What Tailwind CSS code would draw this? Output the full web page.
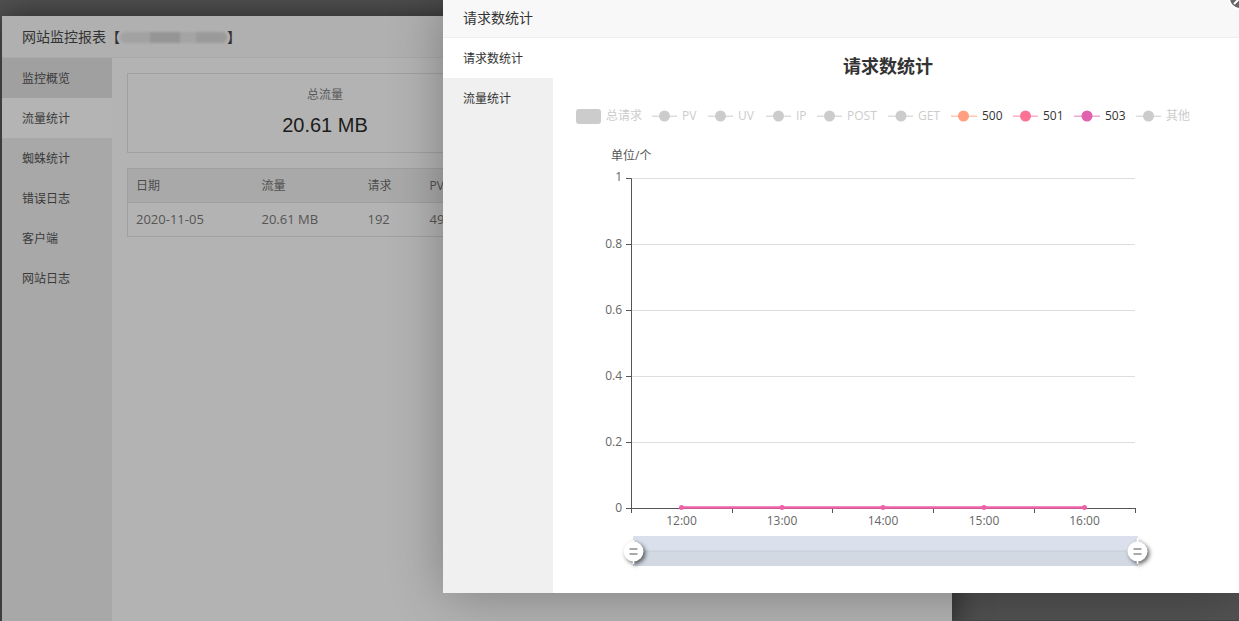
<!DOCTYPE html>
<html lang="zh">

<head>
    <title>网站监控报表</title>
    <meta charset="UTF-8">
    <meta name="viewport" content="width=device-width, initial-scale=1">
    <script src="https://cdn.jsdelivr.net/npm/@tailwindcss/browser@4"></script>
</head>

<body class="relative w-[1239px] h-[621px] overflow-hidden bg-[#525252] font-['Open_Sans','Noto_Sans_CJK_SC',sans-serif] text-xs">

    <div class="absolute left-[2px] top-[16px] w-[950px] h-[620px] flex flex-col bg-[#b3b3b3] shadow-[0_0_30px_rgba(0,0,0,0.55)]">
        <header class="h-[42px] shrink-0 flex items-center pl-5 bg-[#b0b0b0] border-b border-[#a9a9a9] text-sm text-[#333]">
            <span>网站监控报表</span>
            <span class="relative">【<span class="inline-block w-[107px]"></span>】
                <span class="absolute left-[14px] top-[5px] w-[107px] h-[11px] flex rounded-md overflow-hidden blur-[1px]">
                    <span class="w-[30px] bg-[#a2a2a2]"></span>
                    <span class="w-[30px] bg-[#959595]"></span>
                    <span class="w-[16px] bg-[#a4a4a4]"></span>
                    <span class="w-[31px] bg-[#9a9a9a]"></span>
                </span>
            </span>
        </header>
        <div class="flex flex-1">
            <nav class="w-[110px] shrink-0 bg-[#a8a8a8] text-[#3a3a3a]">
                <div class="h-10 flex items-center pl-5 pt-0.5 bg-[#a0a0a0]">监控概览</div>
                <div class="h-10 flex items-center pl-5 pt-0.5 bg-[#b4b4b4]">流量统计</div>
                <div class="h-10 flex items-center pl-5 pt-0.5">蜘蛛统计</div>
                <div class="h-10 flex items-center pl-5 pt-0.5">错误日志</div>
                <div class="h-10 flex items-center pl-5 pt-0.5">客户端</div>
                <div class="h-10 flex items-center pl-5 pt-0.5">网站日志</div>
            </nav>
            <main class="flex-1 px-[15px] pt-[15px]">
                <div class="h-20 flex border border-[#a0a0a0]">
                    <div class="w-[394px] pt-[13px] text-center">
                        <p class="text-[#5a5a5a] leading-4">总流量</p>
                        <p class="mt-[10px] text-xl leading-6 text-[#1c1c1c] font-['Liberation_Sans',sans-serif]">20.61 MB</p>
                    </div>
                </div>
                <table class="mt-[15px] w-full border border-[#a0a0a0] text-left text-[#4e4e4e] table-fixed">
                    <thead class="bg-[#a9a9a9]">
                        <tr class="h-[34px] border-b border-[#a0a0a0]">
                            <th class="w-[126px] pl-2 font-normal">日期</th>
                            <th class="w-[106px] pl-2 font-normal">流量</th>
                            <th class="w-[62px] pl-2 font-normal">请求</th>
                            <th class="pl-2 font-normal">PV</th>
                        </tr>
                    </thead>
                    <tbody class="text-[13px] text-[#555]">
                        <tr class="h-[34px]">
                            <td class="pl-2">2020-11-05</td>
                            <td class="pl-2">20.61 MB</td>
                            <td class="pl-2">192</td>
                            <td class="pl-2">49</td>
                        </tr>
                    </tbody>
                </table>
            </main>
        </div>
    </div>

    <!-- chart dialog -->
    <div class="absolute left-[443px] top-0 w-[796px] h-[593px] flex flex-col bg-white shadow-[1px_1px_50px_rgba(0,0,0,0.3)]">
        <div class="h-[38px] shrink-0 flex items-center pl-5 pb-0.5 bg-[#f8f8f8] border-b border-[#eee] text-sm text-[#333]">请求数统计</div>
        <div class="flex flex-1">
            <aside class="w-[110px] shrink-0 bg-[#f0f0f0] text-[#333]">
                <div class="h-10 flex items-center pl-5 pt-0.5 bg-white">请求数统计</div>
                <div class="h-10 flex items-center pl-5 pt-0.5">流量统计</div>
            </aside>
            <section class="w-[670px] relative">
                <h2 class="pt-[15px] text-center text-lg leading-[27px] font-bold text-[#333]">请求数统计</h2>
                <svg class="absolute left-0 top-0" width="686" height="555" viewBox="553 38 686 555" font-size="12" font-family="'Open Sans','Noto Sans CJK SC',sans-serif">
                    <!-- legend -->
                    <rect x="576" y="109" width="25" height="15" rx="3" fill="#ccc" />
                    <text x="606" y="120" fill="#ccc">总请求</text>
                    <g fill="#ccc" stroke="none">
                        <rect x="652" y="115.5" width="25" height="1.5" fill="#ddd" /><circle cx="664.5" cy="116" r="5.5" />
                        <rect x="708" y="115.5" width="25" height="1.5" fill="#ddd" /><circle cx="720.5" cy="116" r="5.5" />
                        <rect x="766" y="115.5" width="25" height="1.5" fill="#ddd" /><circle cx="778.5" cy="116" r="5.5" />
                        <rect x="817" y="115.5" width="25" height="1.5" fill="#ddd" /><circle cx="829.5" cy="116" r="5.5" />
                        <rect x="888" y="115.5" width="25" height="1.5" fill="#ddd" /><circle cx="901" cy="116" r="5.5" />
                        <rect x="1136" y="115.5" width="25" height="1.5" fill="#ddd" /><circle cx="1148.5" cy="116" r="5.5" />
                        <text x="682" y="120">PV</text>
                        <text x="738" y="120">UV</text>
                        <text x="796" y="120">IP</text>
                        <text x="847" y="120">POST</text>
                        <text x="918" y="120">GET</text>
                        <text x="1166" y="120">其他</text>
                    </g>
                    <rect x="951" y="115.5" width="26" height="1.5" fill="#ffc8b4" /><circle cx="963.5" cy="116" r="5.5" fill="#ff9f7f" />
                    <text x="982" y="120" fill="#333">500</text>
                    <rect x="1013" y="115.5" width="25" height="1.5" fill="#ffb0c4" /><circle cx="1025.5" cy="116" r="5.5" fill="#fb7293" />
                    <text x="1043" y="120" fill="#333">501</text>
                    <rect x="1074" y="115.5" width="26" height="1.5" fill="#eeaad2" /><circle cx="1087" cy="116" r="5.5" fill="#e062ae" />
                    <text x="1105" y="120" fill="#333">503</text>

                    <!-- grid -->
                    <g stroke="#ddd" stroke-width="1">
                        <path d="M631 178.5H1135M631 244.5H1135M631 310.5H1135M631 376.5H1135M631 442.5H1135" />
                    </g>
                    <!-- axes -->
                    <g stroke="#555" stroke-width="1" fill="none">
                        <path d="M626 178.5H631.5V508.5M626 244.5H631M626 310.5H631M626 376.5H631M626 442.5H631M626 508.5H1135.5" />
                        <path d="M631.5 508V513M732.5 508V513M832.5 508V513M933.5 508V513M1034.5 508V513M1135.5 508V513" />
                    </g>
                    <g fill="#666" text-anchor="end">
                        <text x="622" y="181">1</text>
                        <text x="622" y="248">0.8</text>
                        <text x="622" y="314">0.6</text>
                        <text x="622" y="380">0.4</text>
                        <text x="622" y="446">0.2</text>
                        <text x="622" y="512">0</text>
                    </g>
                    <text x="611" y="160" fill="#555">单位/个</text>
                    <g fill="#666" text-anchor="middle">
                        <text x="681.5" y="525">12:00</text>
                        <text x="782" y="525">13:00</text>
                        <text x="883" y="525">14:00</text>
                        <text x="984" y="525">15:00</text>
                        <text x="1084.5" y="525">16:00</text>
                    </g>
                    <!-- series -->
                    <path d="M681.5 507.5H1084.5" stroke="#f062aa" stroke-width="2.6" />
                    <g fill="#ee60a8">
                        <circle cx="681.5" cy="507.5" r="2.5" /><circle cx="782" cy="507.5" r="2.5" /><circle cx="883" cy="507.5" r="2.5" /><circle cx="984" cy="507.5" r="2.5" /><circle cx="1084.5" cy="507.5" r="2.5" />
                    </g>
                    <!-- data zoom -->
                    <rect x="633" y="536" width="505" height="15" fill="#dbe1ec" />
                    <rect x="633" y="551" width="505" height="15" fill="#d2d9e3" />
                    <path d="M633 551H1138" stroke="#c6cdd8" stroke-width="1" />
                    <g class="drop-shadow-[2px_2px_2px_rgba(0,0,0,0.6)]">
                        <path d="M633.5 540V564" stroke="#fff" stroke-width="1.5" />
                        <circle cx="633.5" cy="551.5" r="10" fill="#fff" />
                        <path d="M629.5 549H637.5M629.5 554H637.5" stroke="#555" stroke-width="1.2" fill="none" />
                    </g>
                    <g class="drop-shadow-[2px_2px_2px_rgba(0,0,0,0.6)]">
                        <path d="M1137.5 538V564" stroke="#fff" stroke-width="1.5" />
                        <circle cx="1137.5" cy="551.5" r="10" fill="#fff" />
                        <path d="M1133.5 549H1141.5M1133.5 554H1141.5" stroke="#555" stroke-width="1.2" fill="none" />
                    </g>
                </svg>
            </section>
        </div>
        <!-- close button -->
        <svg class="absolute left-[785px] top-[-14px]" width="24" height="24" viewBox="0 0 24 24">
            <circle cx="12" cy="12" r="11" fill="#666" stroke="#fff" stroke-width="2" />
            <path d="M6 6L18 18M18 6L6 18" stroke="#fff" stroke-width="2" />
        </svg>
    </div>

    <div class="absolute left-[952px] right-0 bottom-0 h-px bg-[#444]"></div>
</body>

</html>
